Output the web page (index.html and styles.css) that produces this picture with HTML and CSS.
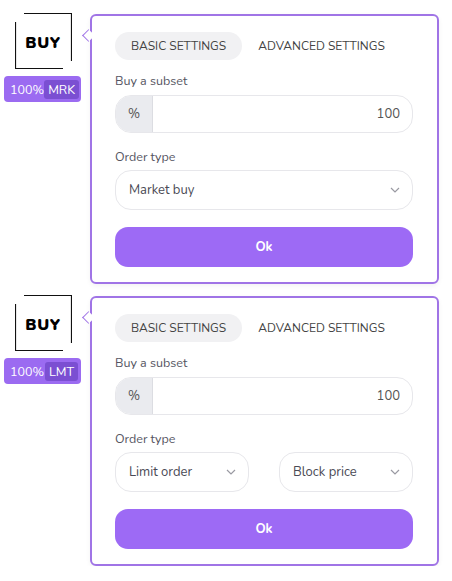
FILE: index.html
```html
<!DOCTYPE html>
<html lang="en">
<head>
    <meta charset="UTF-8">
    <title>Buy orders</title>
    <link rel="stylesheet" href="styles.css">
</head>
<body>
<main>
    <div class="order">
        <div class="side">
            <div class="logo">
                <svg viewBox="0 0 57 56" width="57" height="56">
                    <path d="M9 0.5H56.5V48M0.5 9V55.5H48" fill="none" stroke="#111" stroke-width="1.2"/>
                </svg>
                <span>BUY</span>
            </div>
            <div class="badge">100% <b>MRK</b></div>
        </div>
        <section class="panel">
            <nav class="tabs">
                <span class="tab active">BASIC SETTINGS</span>
                <span class="tab">ADVANCED SETTINGS</span>
            </nav>
            <label class="field-label">Buy a subset</label>
            <div class="input-group">
                <span class="prefix">%</span>
                <span class="value">100</span>
            </div>
            <label class="field-label">Order type</label>
            <div class="selects">
                <div class="select">Market buy
                    <svg viewBox="0 0 10 6" width="10" height="6"><path d="M1 1l4 4 4-4" fill="none" stroke="#9a9aa2" stroke-width="1.2"/></svg>
                </div>
            </div>
            <button>Ok</button>
        </section>
    </div>

    <div class="order">
        <div class="side">
            <div class="logo">
                <svg viewBox="0 0 57 56" width="57" height="56">
                    <path d="M9 0.5H56.5V48M0.5 9V55.5H48" fill="none" stroke="#111" stroke-width="1.2"/>
                </svg>
                <span>BUY</span>
            </div>
            <div class="badge">100% <b>LMT</b></div>
        </div>
        <section class="panel">
            <nav class="tabs">
                <span class="tab active">BASIC SETTINGS</span>
                <span class="tab">ADVANCED SETTINGS</span>
            </nav>
            <label class="field-label">Buy a subset</label>
            <div class="input-group">
                <span class="prefix">%</span>
                <span class="value">100</span>
            </div>
            <label class="field-label">Order type</label>
            <div class="selects">
                <div class="select">Limit order
                    <svg viewBox="0 0 10 6" width="10" height="6"><path d="M1 1l4 4 4-4" fill="none" stroke="#9a9aa2" stroke-width="1.2"/></svg>
                </div>
                <div class="select">Block price
                    <svg viewBox="0 0 10 6" width="10" height="6"><path d="M1 1l4 4 4-4" fill="none" stroke="#9a9aa2" stroke-width="1.2"/></svg>
                </div>
            </div>
            <button>Ok</button>
        </section>
    </div>
</main>
</body>
</html>
```

FILE: styles.css
```css
html {
    background-color: #fff;
    color: #4a4a55;
    font-family: "Nunito", "Lato", "Open Sans", sans-serif;
    font-size: 13px;
}

body {
    margin: 0;
}

main {
    display: flex;
    flex-direction: column;
    gap: 11px;
    padding-top: 13px;
}

.order {
    display: flex;
    align-items: flex-start;
    gap: 9px;
    padding-left: 4px;
}

.side {
    width: 77px;
    display: flex;
    flex-direction: column;
    align-items: center;
    gap: 7px;
}

.logo {
    display: grid;
    width: 57px;
    height: 56px;
    margin-left: 1px;
}

.logo svg,
.logo span {
    grid-area: 1 / 1;
}

.logo span {
    align-self: center;
    justify-self: center;
    margin-top: 3px;
    font-weight: 900;
    font-size: 16px;
    letter-spacing: 0.6px;
    color: #000;
}

.badge {
    box-sizing: border-box;
    width: 77px;
    height: 26px;
    padding: 0 3px 0 6px;
    border-radius: 4px;
    display: flex;
    align-items: center;
    justify-content: space-between;
    background-color: #9b6bf1;
    color: #fff;
    font-size: 12.5px;
}

.badge b {
    font-weight: normal;
    background-color: #7b4fd2;
    border-radius: 3px;
    padding: 0 4px;
    line-height: 19px;
}

.panel {
    position: relative;
    box-sizing: border-box;
    width: 349px;
    height: 270px;
    margin-top: 1px;
    padding: 16px 24px 15px 23px;
    border: 2px solid #a074e6;
    border-radius: 6px;
    background-color: #fff;
    box-shadow: 0 2px 5px rgba(0, 0, 0, 0.05);
    display: flex;
    flex-direction: column;
}

.panel::before {
    content: "";
    position: absolute;
    left: -8.5px;
    top: 14.5px;
    width: 9px;
    height: 9px;
    box-sizing: border-box;
    background-color: #fff;
    border-left: 1.5px solid #a074e6;
    border-bottom: 1.5px solid #a074e6;
    transform: rotate(45deg);
}

.tabs {
    display: flex;
}

.tab {
    height: 28px;
    line-height: 28px;
    padding: 0 16px;
    border-radius: 14px;
    font-size: 12px;
    color: #444;
}

.tab.active {
    background-color: #f1f1f3;
}

.field-label {
    margin: 12px 0 5px;
    line-height: 18px;
    font-size: 12.5px;
    color: #555562;
}

.input-group + .field-label {
    margin: 15px 0 4px;
}

.input-group {
    display: flex;
    height: 38px;
    box-sizing: border-box;
    border: 1px solid #e7e7eb;
    border-radius: 16px;
    overflow: hidden;
}

.prefix {
    width: 36px;
    display: flex;
    align-items: center;
    justify-content: center;
    background-color: #eaebef;
    border-right: 1px solid #dcdde2;
    color: #555;
}

.value {
    flex: 1;
    display: flex;
    align-items: center;
    justify-content: flex-end;
    padding-right: 12px;
    color: #555;
}

.selects {
    display: flex;
    gap: 30px;
}

.select {
    flex: 1;
    height: 40px;
    box-sizing: border-box;
    border: 1px solid #e7e7eb;
    border-radius: 16px;
    padding: 0 12px 0 13px;
    display: flex;
    align-items: center;
    justify-content: space-between;
    color: #4a4a55;
}

button {
    margin-top: 17px;
    height: 40px;
    border: none;
    border-radius: 13px;
    background-color: #9d6af5;
    color: #fff;
    font-family: inherit;
    font-weight: bold;
    font-size: 13px;
}
```
